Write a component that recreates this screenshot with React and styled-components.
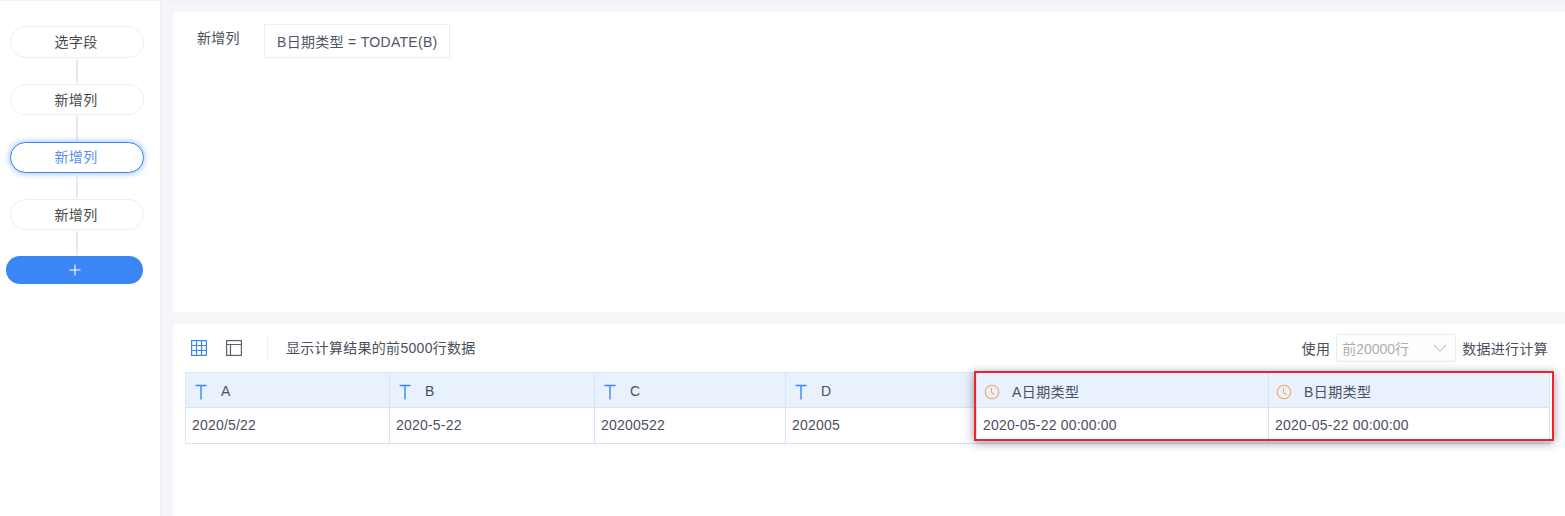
import React from "react";
import styled, { createGlobalStyle } from "styled-components";

const Global = createGlobalStyle`
  html, body { margin: 0; padding: 0; background: #fff; }
  body { font-family: "Liberation Sans", "Noto Sans CJK SC", sans-serif; font-size: 14px; color: #4a4f5c; }
`;
const Page = styled.div`
  display: flex; width: 1565px; height: 516px; overflow: hidden;
  border-top: 1px solid #eff1f5; box-sizing: border-box;
`;
const Sidebar = styled.aside`
  width: 162px; flex: none; box-sizing: border-box; border-right: 2px solid #f0f2f6;
  padding: 25px 0 0 10px; display: flex; flex-direction: column;
`;
const Step = styled.div`
  width: 134px; height: ${p => p.$h || 31}px; box-sizing: border-box; border-radius: 16px;
  display: flex; align-items: center; justify-content: center;
  font-size: 14px; letter-spacing: .3px; background: #fff; padding: 0 2px ${p => p.$active ? 3 : 2}px 0;
  color: ${p => p.$active ? "#5b8ff0" : "#4a4a4a"};
  border: 1px solid ${p => p.$active ? "#3a86f5" : "#eceef2"};
  box-shadow: ${p => p.$active ? "0 0 6px rgba(58,134,245,.6)" : "none"};
`;
const Connector = styled.div`
  width: 2px; height: ${p => p.$h || 24}px; background: #e6e9ef; margin: 1px 0 1px 66px;
`;
const AddButton = styled.div`
  width: 137px; height: 28px; margin-left: -4px; border-radius: 14px; background: #3a86f5;
  display: flex; align-items: center; justify-content: center; color: #fff;
`;
const Main = styled.main`
  flex: 1; background: #f5f6f9; padding: 11px 0 0 11px; display: flex; flex-direction: column; gap: 12px; min-width: 0;
`;
const ConfigPanel = styled.section`
  height: 300px; flex: none; background: #fff; display: flex; align-items: flex-start; padding: 12px 0 0 23px; box-sizing: border-box;
`;
const ConfigLabel = styled.div`
  font-size: 14px; letter-spacing: .3px; line-height: 20px; margin: 4px 24px 0 0; padding-left: 1px; color: #4a4f5c; width: 43px; white-space: nowrap;
`;
const Formula = styled.div`
  height: 34px; box-sizing: border-box; border: 1px solid #eceef2; padding: 0 12px 1px;
  display: flex; align-items: center; font-size: 14px; letter-spacing: .3px; color: #4f5666; width: 186px; white-space: nowrap;
`;
const ResultPanel = styled.section`
  flex: 1; background: #fff; padding: 10px 17px 0 12px; position: relative;
`;
const Toolbar = styled.div`
  display: flex; align-items: center; height: 28px; margin-bottom: 10px;
`;
const IconSlot = styled.span`
  width: 16px; height: 16px; display: block; margin: 0 ${p => p.$mr}px 0 ${p => p.$ml}px;
`;
const Divider = styled.div`
  width: 1px; height: 24px; background: #eff1f5; margin-right: 18px;
`;
const Note = styled.div`
  font-size: 14px; letter-spacing: .3px; padding-bottom: 2px; color: #4a4f5c; flex: 1;
`;
const RightText = styled.div`
  font-size: 14px; letter-spacing: .3px; padding-bottom: 1px; color: #4a4f5c;
`;
const Select = styled.div`
  width: 120px; height: 28px; box-sizing: border-box; border: 1px solid #e9ebef; border-radius: 3px; margin: 0 6px;
  display: flex; align-items: center; justify-content: space-between; padding: 0 7px 1px 5px; font-size: 14px; color: #a9adb5; background: #fdfdfd;
`;
const Table = styled.div`
  display: grid; grid-template-columns: 204px 205px 191px 191px 292px 281px; width: 1364px;
  border: 1px solid #d9e6f8; border-width: 1px 0 0 1px; box-sizing: border-box;
`;
const HeadCell = styled.div`
  height: 35px; box-sizing: border-box; background: #e9f1fd; border-right: 1px solid #d4e3f9; border-bottom: 1px solid #d4e3f9;
  display: flex; align-items: center; padding: 1px 0 0 7px; gap: 12px; font-size: 14px; letter-spacing: .4px; color: #4a5060;
`;
const HeadIcon = styled.span`
  display: block; width: 16px; height: 16px; margin-top: 3px;
`;
const BodyCell = styled.div`
  height: 36px; box-sizing: border-box; background: #fff; border-right: 1px solid #d4e3f9; border-bottom: 1px solid #d4e3f9;
  display: flex; align-items: center; padding: 0 0 2px 6px; font-size: 14px; letter-spacing: .2px; color: #4a5060;
`;
const Highlight = styled.div`
  position: absolute; left: 801px; top: 47px; width: 580px; height: 70px; box-sizing: border-box;
  border: 2px solid #f5222d; box-shadow: 0 2px 9px rgba(40,50,80,.5); pointer-events: none;
`;
const TIcon = () => (
  <svg width="16" height="16" viewBox="0 0 16 16"><path d="M2.5 1.5h11M8 1.5v14" stroke="#3a86f5" strokeWidth="1.4" fill="none"/></svg>
);
const ClockIcon = () => (
  <svg width="16" height="16" viewBox="0 0 16 16" fill="none" stroke="#f3a65a" strokeWidth="1.1"><circle cx="8" cy="8" r="6.8"/><path d="M7.5 4V8.5L10.2 10.5"/></svg>
);
const GridIcon = () => (
  <svg width="16" height="16" viewBox="0 0 16 16" fill="none" stroke="#3a86f5" strokeWidth="1.2"><rect x=".6" y=".6" width="14.8" height="14.8"/><path d="M5.5 .5v15M10.5 .5v15M.5 5.5h15M.5 10.5h15"/></svg>
);
const LayoutIcon = () => (
  <svg width="16" height="16" viewBox="0 0 16 16" fill="none" stroke="#5d626e" strokeWidth="1.2"><rect x=".6" y=".6" width="14.8" height="14.8"/><path d="M.5 4.5h15M4.5 4.5v11"/></svg>
);
const Plus = () => (
  <svg width="12" height="12" viewBox="0 0 12 12"><path d="M6 .5v11M.5 6h11" stroke="#fff" strokeWidth="1.1"/></svg>
);
const Chevron = () => (
  <svg width="16" height="10" viewBox="0 0 16 10" fill="none" stroke="#c6cad1" strokeWidth="1.1"><path d="M2 2l6 6 6-6"/></svg>
);

const cols = [
  { head: "A", value: "2020/5/22", icon: <TIcon /> },
  { head: "B", value: "2020-5-22", icon: <TIcon /> },
  { head: "C", value: "20200522", icon: <TIcon /> },
  { head: "D", value: "202005", icon: <TIcon /> },
  { head: "A日期类型", value: "2020-05-22 00:00:00", icon: <ClockIcon /> },
  { head: "B日期类型", value: "2020-05-22 00:00:00", icon: <ClockIcon /> },
];

export default function App() {
  return (
    <Page>
      <Global />
      <Sidebar>
        <Step $h={32}>选字段</Step>
        <Connector />
        <Step>新增列</Step>
        <Connector $h={25} />
        <Step $active>新增列</Step>
        <Connector />
        <Step>新增列</Step>
        <Connector />
        <AddButton><Plus /></AddButton>
      </Sidebar>
      <Main>
        <ConfigPanel>
          <ConfigLabel>新增列</ConfigLabel>
          <Formula>B日期类型 = TODATE(B)</Formula>
        </ConfigPanel>
        <ResultPanel>
          <Toolbar>
            <IconSlot $ml={6} $mr={19}><GridIcon /></IconSlot>
            <IconSlot $ml={0} $mr={25}><LayoutIcon /></IconSlot>
            <Divider />
            <Note>显示计算结果的前5000行数据</Note>
            <RightText>使用</RightText>
            <Select>前20000行<Chevron /></Select>
            <RightText>数据进行计算</RightText>
          </Toolbar>
          <Table>
            {cols.map(c => <HeadCell key={c.head}><HeadIcon>{c.icon}</HeadIcon><span>{c.head}</span></HeadCell>)}
            {cols.map(c => <BodyCell key={c.head}>{c.value}</BodyCell>)}
          </Table>
          <Highlight />
        </ResultPanel>
      </Main>
    </Page>
  );
}
